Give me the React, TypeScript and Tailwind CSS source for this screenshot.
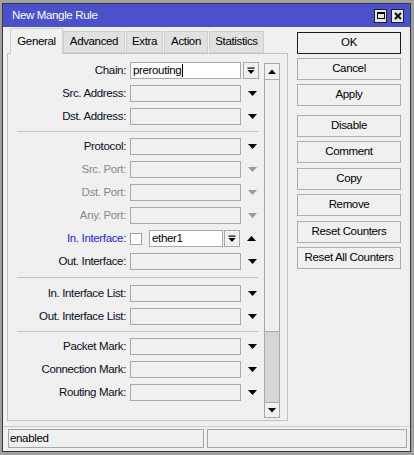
import React from "react";

const Down = ({ color = "#000" }: { color?: string }) => (
  <svg width="9" height="5" viewBox="0 0 9 5">
    <path d="M0 0H9L4.5 5Z" fill={color} />
  </svg>
);

const Up = () => (
  <svg width="9" height="5" viewBox="0 0 9 5">
    <path d="M0 5H9L4.5 0Z" fill="#000" />
  </svg>
);

const Combo = () => (
  <svg width="8" height="8" viewBox="0 0 8 8">
    <rect x="0.5" y="0.5" width="7" height="1.2" fill="#000" />
    <path d="M0.5 3H7.5L4 7Z" fill="#000" />
  </svg>
);

const SmallUp = () => (
  <svg width="8" height="5" viewBox="0 0 8 5">
    <path d="M0 5H8L4 0.5Z" fill="#000" />
  </svg>
);
const SmallDown = () => (
  <svg width="8" height="5" viewBox="0 0 8 5">
    <path d="M0 0H8L4 4.5Z" fill="#000" />
  </svg>
);

type Tone = "normal" | "gray" | "blue";

function Label({ text, tone }: { text: string; tone: Tone }) {
  const cls =
    tone === "gray"
      ? "w-[118px] text-right text-[#8a8a8a]"
      : tone === "blue"
      ? "w-[118px] text-right text-[#2626e0]"
      : "w-[118px] text-right text-[#0c0c22]";
  return <div className={cls}>{text}</div>;
}

function SelectRow({ label, tone = "normal" }: { label: string; tone?: Tone }) {
  return (
    <div className="flex h-[23px] items-center">
      <Label text={label} tone={tone} />
      <div className="ml-[4px] w-[111px] h-[17px] border border-[#a9a9a9] bg-[#f0f0f0]" />
      <div className="w-[22px] flex justify-center">
        <Down color={tone === "gray" ? "#9a9a9a" : "#000"} />
      </div>
    </div>
  );
}

function Sep({ big = false }: { big?: boolean }) {
  return (
    <div className={big ? "py-[4px] pl-[9px] pr-[6px]" : "py-[3px] pl-[9px] pr-[6px]"}>
      <div className="h-px bg-[#c3c3c3]" />
    </div>
  );
}

function Tab({ text, active = false, w }: { text: string; active?: boolean; w: string }) {
  return active ? (
    <div className={`${w} h-[26px] border border-b-0 border-[#cfcfcf] bg-[#f0f0f0] flex items-center justify-center`}>
      {text}
    </div>
  ) : (
    <div className={`${w} h-[22px] mb-[1px] border border-[#d0d0d0] bg-[#e1e1e1] flex items-center justify-center`}>
      {text}
    </div>
  );
}

function Btn({ text, def = false, mt }: { text: string; def?: boolean; mt: string }) {
  const cls = def
    ? `${mt} h-[22px] border border-[#1a1a1a] bg-[#f0f0f0] flex items-center justify-center`
    : `${mt} h-[22px] border border-[#adadad] bg-[#f0f0f0] flex items-center justify-center`;
  return <div className={cls}>{text}</div>;
}

export default function App() {
  return (
    <div className="w-[414px] h-[455px] bg-[#a0a0a0] pl-[2px] pt-[3px] pr-[3px] pb-[3px] font-['Liberation_Sans',Arial,sans-serif] text-[11.5px] tracking-[-0.35px] leading-none text-black">
      <div className="w-[409px] h-[449px] border border-[#3a3a3a] bg-[#f0f0f0] flex flex-col">
        {/* Title bar */}
        <div className="h-[23px] bg-[#4b50cb] flex items-center pl-[9px] pr-[6px]">
          <span className="flex-1 text-white">New Mangle Rule</span>
          <div className="flex gap-[4px] items-center">
            <div className="w-[13px] h-[14px] border border-[#202020] bg-[#e6e6e6] flex items-center justify-center">
              <div className="w-[8px] h-[7px] border border-[#000] border-t-2" />
            </div>
            <div className="w-[13px] h-[14px] border border-[#202020] bg-[#e6e6e6] flex items-center justify-center">
              <svg width="8" height="8" viewBox="0 0 8 8">
                <path d="M1 1L7 7M7 1L1 7" stroke="#000" strokeWidth="1.8" />
              </svg>
            </div>
          </div>
        </div>

        {/* Main */}
        <div className="flex">
          {/* Left column */}
          <div className="ml-[4px] mt-[1px] w-[281px] flex flex-col">
            <div className="relative z-10 flex items-end h-[26px] -mb-px pl-[3px]">
              <Tab text="General" active w="w-[53px]" />
              <Tab text="Advanced" w="w-[62px]" />
              <div className="w-px" />
              <Tab text="Extra" w="w-[37px]" />
              <div className="w-px" />
              <Tab text="Action" w="w-[44px]" />
              <div className="w-px" />
              <Tab text="Statistics" w="w-[55px]" />
            </div>
            <div className="h-[368px] border border-[#c2c2c2] bg-[#f0f0f0] flex">
              {/* Rows */}
              <div className="w-[256px] pt-[5px] flex flex-col">
                <div className="flex h-[23px] items-center">
                  <Label text="Chain:" tone="normal" />
                  <div className="ml-[4px] w-[111px] h-[17px] border border-[#a9a9a9] bg-white flex items-center pl-[2px]">
                    <span>prerouting</span>
                    <span className="ml-px w-px h-[13px] bg-black" />
                  </div>
                  <div className="ml-[2px] w-[16px] h-[17px] border border-[#a9a9a9] bg-[#f0f0f0] flex items-center justify-center">
                    <Combo />
                  </div>
                </div>
                <SelectRow label="Src. Address:" />
                <SelectRow label="Dst. Address:" />
                <Sep />
                <SelectRow label="Protocol:" />
                <SelectRow label="Src. Port:" tone="gray" />
                <SelectRow label="Dst. Port:" tone="gray" />
                <SelectRow label="Any. Port:" tone="gray" />
                <div className="flex h-[23px] items-center">
                  <Label text="In. Interface:" tone="blue" />
                  <div className="ml-[4px] w-[12px] h-[12px] border border-[#a0a0a0] bg-white" />
                  <div className="ml-[7px] w-[74px] h-[17px] border border-[#a9a9a9] bg-white flex items-center pl-[2px]">
                    ether1
                  </div>
                  <div className="ml-px w-[16px] h-[17px] border border-[#a9a9a9] bg-[#f0f0f0] flex items-center justify-center">
                    <Combo />
                  </div>
                  <div className="w-[23px] flex justify-center">
                    <Up />
                  </div>
                </div>
                <SelectRow label="Out. Interface:" />
                <Sep big />
                <SelectRow label="In. Interface List:" />
                <SelectRow label="Out. Interface List:" />
                <Sep />
                <SelectRow label="Packet Mark:" />
                <SelectRow label="Connection Mark:" />
                <SelectRow label="Routing Mark:" />
              </div>
              {/* Scrollbar */}
              <div className="mt-[9px] mb-[2px] w-[16px] h-[355px] border border-[#a8a8a8] flex flex-col bg-[#f0f0f0]">
                <div className="h-[16px] border-b border-[#a8a8a8] flex items-center justify-center">
                  <SmallUp />
                </div>
                <div className="h-[252px] border-b border-[#a8a8a8] bg-[#f0f0f0]" />
                <div className="flex-1 bg-[#d6d6d6]" />
                <div className="h-[15px] border-t border-[#a8a8a8] flex items-center justify-center bg-[#f0f0f0]">
                  <SmallDown />
                </div>
              </div>
            </div>
          </div>

          {/* Right column */}
          <div className="ml-[9px] mt-[5px] w-[104px] flex flex-col">
            <Btn text="OK" def mt="mt-0" />
            <Btn text="Cancel" mt="mt-[4px]" />
            <Btn text="Apply" mt="mt-[4px]" />
            <Btn text="Disable" mt="mt-[9px]" />
            <Btn text="Comment" mt="mt-[4px]" />
            <Btn text="Copy" mt="mt-[5px]" />
            <Btn text="Remove" mt="mt-[4px]" />
            <Btn text="Reset Counters" mt="mt-[5px]" />
            <Btn text="Reset All Counters" mt="mt-[4px]" />
          </div>
        </div>

        {/* Status bar */}
        <div className="mt-[5px] border-t border-[#cdcdcd] pt-[2px] flex pl-[5px]">
          <div className="w-[196px] h-[19px] border border-[#a6a6a6] flex items-center pl-[1px]">
            enabled
          </div>
          <div className="ml-[3px] w-[200px] h-[19px] border border-[#a6a6a6]" />
        </div>
      </div>
    </div>
  );
}
